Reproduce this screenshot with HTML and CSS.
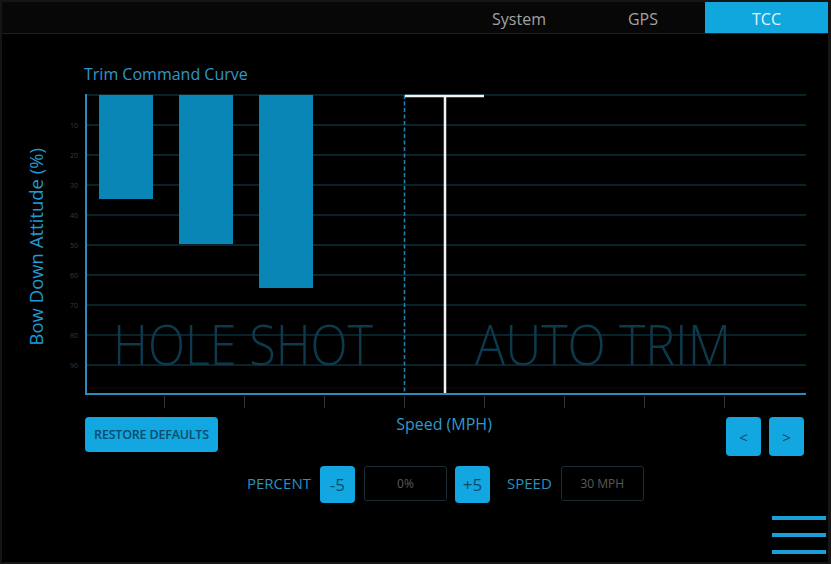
FILE: index.html
```html
<!DOCTYPE html>
<html>
<head>
<meta charset="utf-8">
<link rel="stylesheet" href="styles.css">
</head>
<body>
<div class="frame">
  <div class="topbar">
    <div class="tab">System</div>
    <div class="tab">GPS</div>
    <div class="tab active">TCC</div>
  </div>
  <div class="main">
    <div class="title">Trim Command Curve</div>
    <div class="chart-row">
      <div class="ylabel"><span>Bow Down Attitude (%)</span></div>
      <svg class="chart" width="750" height="326" viewBox="0 0 750 326" xmlns="http://www.w3.org/2000/svg">
        <g stroke="#0c2f3b" stroke-width="1.5">
          <line x1="26" y1="11" x2="746" y2="11"/>
          <line x1="26" y1="41" x2="746" y2="41"/>
          <line x1="26" y1="71" x2="746" y2="71"/>
          <line x1="26" y1="101" x2="746" y2="101"/>
          <line x1="26" y1="131" x2="746" y2="131"/>
          <line x1="26" y1="161" x2="746" y2="161"/>
          <line x1="26" y1="191" x2="746" y2="191"/>
          <line x1="26" y1="221" x2="746" y2="221"/>
          <line x1="26" y1="251" x2="746" y2="251"/>
          <line x1="26" y1="281" x2="746" y2="281"/>
        </g>
        <line x1="28" y1="304" x2="746" y2="304" stroke="#1c0808" stroke-width="1"/>
        <g class="ticklbl" text-anchor="end">
          <text x="18" y="43.5">10</text>
          <text x="18" y="73.5">20</text>
          <text x="18" y="103.5">30</text>
          <text x="18" y="133.5">40</text>
          <text x="18" y="163.5">50</text>
          <text x="18" y="193.5">60</text>
          <text x="18" y="223.5">70</text>
          <text x="18" y="253.5">80</text>
          <text x="18" y="283.5">90</text>
        </g>
        <text class="zone" x="53" y="281" textLength="260" lengthAdjust="spacingAndGlyphs">HOLE SHOT</text>
        <text class="zone" x="415" y="281" textLength="256" lengthAdjust="spacingAndGlyphs">AUTO TRIM</text>
        <g fill="#0a86b6">
          <rect x="39" y="11" width="54" height="104"/>
          <rect x="119" y="11" width="54" height="149"/>
          <rect x="199" y="11" width="54" height="193"/>
        </g>
        <line x1="344.5" y1="11" x2="344.5" y2="310" stroke="#1f80ae" stroke-width="1.6" stroke-dasharray="4 2.5"/>
        <line x1="345" y1="12" x2="424" y2="12" stroke="#f4f4f4" stroke-width="2.5"/>
        <line x1="385" y1="12" x2="385" y2="310" stroke="#f4f4f4" stroke-width="2.5"/>
        <g stroke="#333" stroke-width="1">
          <line x1="104.5" y1="312" x2="104.5" y2="324"/>
          <line x1="184.5" y1="312" x2="184.5" y2="324"/>
          <line x1="264.5" y1="312" x2="264.5" y2="324"/>
          <line x1="344.5" y1="312" x2="344.5" y2="324"/>
          <line x1="424.5" y1="312" x2="424.5" y2="324"/>
          <line x1="504.5" y1="312" x2="504.5" y2="324"/>
          <line x1="584.5" y1="312" x2="584.5" y2="324"/>
          <line x1="664.5" y1="312" x2="664.5" y2="324"/>
        </g>
        <line x1="26" y1="10" x2="26" y2="311" stroke="#2b8cbc" stroke-width="2"/>
        <line x1="25" y1="310" x2="746" y2="310" stroke="#2b8cbc" stroke-width="2"/>
      </svg>
    </div>
    <div class="controls">
      <button class="btn restore">RESTORE DEFAULTS</button>
      <div class="xlabel">Speed (MPH)</div>
      <div class="nav">
        <button class="btn sq">&lt;</button>
        <button class="btn sq">&gt;</button>
      </div>
    </div>
    <div class="adjust">
      <span class="lbl">PERCENT</span>
      <button class="btn step">-5</button>
      <div class="field">0%</div>
      <button class="btn step">+5</button>
      <span class="lbl speed">SPEED</span>
      <div class="field">30 MPH</div>
    </div>
    <div class="menu-row">
      <div class="hamburger"><i></i><i></i><i></i></div>
    </div>
  </div>
</div>
</body>
</html>
```

FILE: styles.css
```css
* { box-sizing: border-box; }
html, body { margin: 0; padding: 0; background: #000; }
body { font-family: "Open Sans", "Noto Sans", sans-serif; }

.frame {
  width: 831px;
  height: 564px;
  border: 2px solid #151515;
  border-right-width: 3px;
  background: #000;
  overflow: hidden;
}

.topbar {
  height: 32px;
  background: #070707;
  border-bottom: 1px solid #0c2530;
  display: flex;
  justify-content: flex-end;
}
.tab {
  width: 124px;
  height: 31px;
  display: flex;
  align-items: center;
  justify-content: center;
  color: #a2a2a2;
  font-size: 16px;
  padding-top: 3px;
}
.tab.active {
  width: 123px;
  background: #10a6de;
  color: #e2f4fb;
}

.main { display: flex; flex-direction: column; }

.title {
  margin: 30px 0 0 82px;
  height: 20px;
  line-height: 20px;
  font-size: 16px;
  color: #2f98c9;
}

.chart-row { display: flex; height: 326px; }
.ylabel {
  width: 58px;
  display: flex;
  align-items: center;
  justify-content: center;
  padding-left: 8px;
}
.ylabel span {
  writing-mode: vertical-rl;
  transform: rotate(180deg);
  font-size: 18.5px;
  font-weight: 500;
  color: #1f9ad2;
  white-space: nowrap;
}
.chart { display: block; }
.ticklbl text {
  font-family: "Open Sans", sans-serif;
  font-size: 7px;
  fill: #3a3a3a;
}
.zone {
  font-family: "Open Sans", sans-serif;
  font-weight: 300;
  font-size: 56px;
  fill: #0e3a4d;
}

.btn {
  border: none;
  background: #12a7e0;
  color: #0b4b6d;
  border-radius: 4px;
  font-family: "Open Sans", sans-serif;
  padding: 0;
  display: flex;
  align-items: center;
  justify-content: center;
}

.controls {
  display: flex;
  align-items: flex-start;
  margin-top: 7px;
  height: 39px;
  padding-right: 24px;
}
.restore {
  margin-left: 83px;
  width: 133px;
  height: 35px;
  font-size: 12.5px;
  font-weight: 600;
  letter-spacing: -0.2px;
}
.xlabel {
  margin-left: 176px;
  margin-top: -3px;
  width: 100px;
  text-align: center;
  font-size: 16px;
  line-height: 20px;
  color: #2f98c9;
}
.nav { margin-left: auto; display: flex; gap: 8px; }
.sq {
  width: 35px;
  height: 39px;
  font-size: 15px;
}

.adjust {
  display: flex;
  align-items: center;
  margin: 10px 0 0 245px;
  height: 37px;
}
.lbl {
  font-size: 15px;
  color: #2a8fc1;
  margin-right: 9px;
  margin-top: -3px;
}
.lbl.speed { margin-left: 17px; margin-right: 0; }
.step {
  width: 35px;
  height: 37px;
  font-size: 17px;
}
.field {
  width: 83px;
  height: 35px;
  margin: 0 8px 0 9px;
  border: 1.5px solid #1c2a32;
  border-radius: 3px;
  display: flex;
  align-items: center;
  justify-content: center;
  color: #5a5a5a;
  font-size: 12px;
  align-self: flex-start;
}

.menu-row {
  display: flex;
  justify-content: flex-end;
  margin-top: 13px;
}
.hamburger {
  width: 54px;
  margin-right: 2px;
  display: flex;
  flex-direction: column;
  gap: 13px;
}
.hamburger i {
  display: block;
  height: 4px;
  background: #1a9fd8;
}
```
